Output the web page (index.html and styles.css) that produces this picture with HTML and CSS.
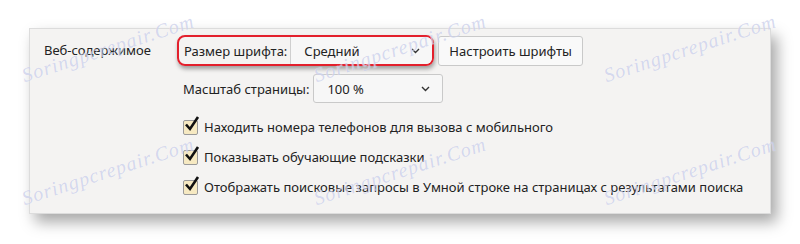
FILE: index.html
```html
<!DOCTYPE html>
<html lang="ru">
<head>
  <meta charset="UTF-8" />
  <title>Веб-содержимое</title>
  <link rel="stylesheet" href="styles.css">
</head>
<body>

  <!-- Панель настроек -->
  <div class="panel">
    <div class="section-title">Веб-содержимое</div>

    <div class="section-body">
      <div class="row">
        <div class="highlight">
          <span class="label">Размер шрифта:</span>
          <div class="select select-font">
            <span>Средний</span>
            <svg class="chevron" width="9" height="6" viewBox="0 0 9 6"><path d="M1 1 L4.5 4.5 L8 1" fill="none" stroke="#333" stroke-width="1.4"/></svg>
          </div>
        </div>
        <button class="btn">Настроить шрифты</button>
      </div>

      <div class="row indent">
        <span class="label">Масштаб страницы:</span>
        <div class="select select-zoom">
          <span>100 %</span>
          <svg class="chevron" width="9" height="6" viewBox="0 0 9 6"><path d="M1 1 L4.5 4.5 L8 1" fill="none" stroke="#333" stroke-width="1.4"/></svg>
        </div>
      </div>

      <div class="checks indent">
        <label class="check"><span class="box"><svg width="18" height="18" viewBox="0 0 18 18"><path d="M3 8.5 L7 13 L15 1" fill="none" stroke="#111" stroke-width="2.6"/></svg></span>Находить номера телефонов для вызова с мобильного</label>
        <label class="check"><span class="box"><svg width="18" height="18" viewBox="0 0 18 18"><path d="M3 8.5 L7 13 L15 1" fill="none" stroke="#111" stroke-width="2.6"/></svg></span>Показывать обучающие подсказки</label>
        <label class="check"><span class="box"><svg width="18" height="18" viewBox="0 0 18 18"><path d="M3 8.5 L7 13 L15 1" fill="none" stroke="#111" stroke-width="2.6"/></svg></span>Отображать поисковые запросы в Умной строке на страницах с результатами поиска</label>
      </div>
    </div>
  </div>

  <!-- водяной знак -->
  <div class="wm wm1">Soringpcrepair.Com</div>
  <div class="wm wm2">Soringpcrepair.Com</div>
  <div class="wm wm3">Soringpcrepair.Com</div>
  <div class="wm wm4">Soringpcrepair.Com</div>
  <div class="wm wm5">Soringpcrepair.Com</div>
  <div class="wm wm6">Soringpcrepair.Com</div>

</body>
</html>
```

FILE: styles.css
```css
body {
  margin: 0;
  background: #fff;
  font-family: "Noto Sans", "Open Sans", sans-serif;
  font-size: 13px;
  color: #222;
  width: 800px;
  height: 244px;
  overflow: hidden;
  position: relative;
}

.panel {
  margin: 28px 0 0 29px;
  width: 740px;
  height: 184px;
  background: #f4f3f2;
  border: 1px solid #dcdcdc;
  box-shadow: 6px 8px 14px rgba(0, 0, 0, 0.35);
  display: flex;
}

.section-title {
  width: 134px;
  padding: 12px 0 0 14px;
}

.section-body {
  display: flex;
  flex-direction: column;
  padding-top: 6px;
  margin-left: -1px;
}

.indent {
  padding-left: 6px;
}

.row {
  display: flex;
  align-items: center;
  height: 31px;
  margin-bottom: 7px;
}

.row .label {
  margin-right: 4px;
}

.highlight {
  display: flex;
  align-items: center;
  height: 27px;
  padding-left: 5px;
  margin-right: 4px;
  border: 2px solid #e3202c;
  border-radius: 8px;
  box-shadow: 1px 3px 4px rgba(0, 0, 0, 0.35);
}

.select {
  display: flex;
  align-items: center;
  justify-content: space-between;
  height: 29px;
  box-sizing: border-box;
  padding: 0 12px 0 13px;
  background: #f7f7f7;
  border: 1px solid #c9c9c9;
  border-radius: 3px;
}

.select-font {
  width: 142px;
  height: 27px;
  border: none;
  border-left: 1px solid #cfcfcf;
  border-radius: 0 6px 6px 0;
  margin-left: -1px;
}

.select-zoom {
  width: 130px;
}

.btn {
  font-family: inherit;
  font-size: 13px;
  color: #222;
  height: 30px;
  padding: 0 10px;
  background: #f9f9f9;
  border: 1px solid #c9c9c9;
  border-radius: 3px;
}

.checks {
  display: flex;
  flex-direction: column;
  gap: 12px;
  margin-top: 7px;
}

.check {
  display: flex;
  align-items: center;
  height: 18px;
}

.box {
  position: relative;
  width: 13px;
  height: 13px;
  margin-right: 6px;
  background: #f6e9c2;
  border: 1px solid #9a9a9a;
  border-radius: 2px;
}

.box svg {
  position: absolute;
  left: -1px;
  top: -5px;
}

.wm {
  position: absolute;
  font-family: "Liberation Serif", serif;
  font-style: italic;
  font-size: 20px;
  letter-spacing: 1px;
  color: rgba(150, 160, 215, 0.4);
  text-shadow: 0 0 1px rgba(255, 255, 255, 0.8);
  transform: rotate(-18deg);
  transform-origin: left bottom;
  white-space: nowrap;
  pointer-events: none;
}

.wm1 { left: 26px; top: 64px; }
.wm2 { left: 318px; top: 64px; }
.wm3 { left: 608px; top: 64px; }
.wm4 { left: 26px; top: 187px; }
.wm5 { left: 318px; top: 187px; }
.wm6 { left: 608px; top: 187px; }
```
